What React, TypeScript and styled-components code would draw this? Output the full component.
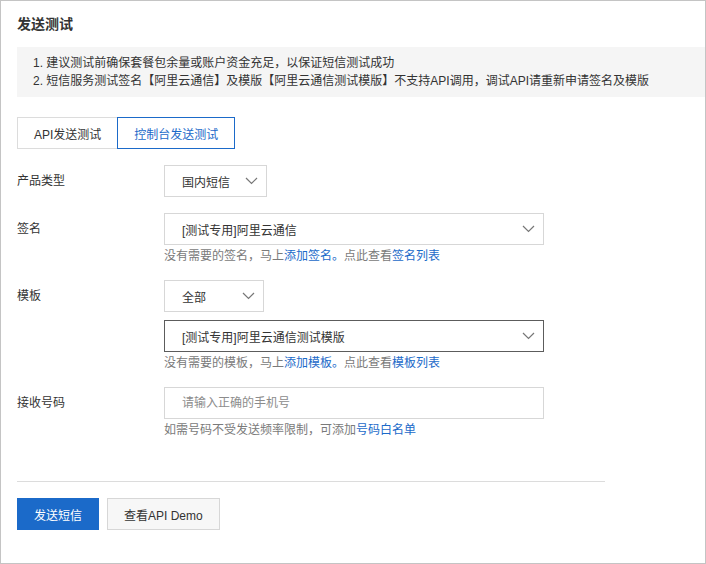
import React from "react";
import styled, { createGlobalStyle } from "styled-components";

const GlobalStyle = createGlobalStyle`
    html, body {
        margin: 0;
        padding: 0;
        background: #fff;
    }
    body {
        font-family: "Liberation Sans", "Noto Sans CJK SC", sans-serif;
        font-size: 12px;
        color: #333;
    }
    * {
        box-sizing: border-box;
    }
`;

const Page = styled.div`
    width: 706px;
    height: 564px;
    border: 1px solid #c4c4c4;
    padding: 0 0 0 16px;
    display: flex;
    flex-direction: column;
`;

const Title = styled.h2`
    margin: 0;
    padding-top: 12px;
    height: 46px;
    line-height: 22px;
    font-size: 14px;
    font-weight: 700;
    color: #333;
`;

const Notice = styled.div`
    background: #f5f5f5;
    padding: 7px 16px;
    line-height: 18px;
    font-size: 12px;
    color: #333;
`;

const Tabs = styled.div`
    display: flex;
    margin-top: 20px;
`;

const Tab = styled.button<{ $active?: boolean }>`
    height: 32px;
    padding: 0 16px;
    font-family: inherit;
    font-size: 12px;
    background: #fff;
    cursor: pointer;
    color: ${({ $active }) => ($active ? "#1b6ac9" : "#333")};
    border: 1px solid ${({ $active }) => ($active ? "#1b6ac9" : "#dcdcdc")};
    margin-left: ${({ $active }) => ($active ? "-1px" : "0")};
`;

const Form = styled.div`
    display: flex;
    flex-direction: column;
    gap: 16px;
    margin-top: 16px;
`;

const Row = styled.div`
    display: flex;
    align-items: flex-start;
`;

const Label = styled.div`
    width: 147px;
    flex: 0 0 auto;
    line-height: 32px;
    color: #333;
`;

const Control = styled.div`
    display: flex;
    flex-direction: column;
    gap: 8px;
`;

const Field = styled.div`
    display: flex;
    flex-direction: column;
`;

const SelectBox = styled.div<{ $width: number; $focus?: boolean }>`
    width: ${({ $width }) => $width}px;
    height: 32px;
    border: 1px solid ${({ $focus }) => ($focus ? "#5c5c5c" : "#d7d7d7")};
    background: #fff;
    display: flex;
    align-items: center;
    justify-content: space-between;
    padding: 0 8px 0 17px;
    color: #333;
    cursor: pointer;
`;

const InputBox = styled.input`
    width: 380px;
    height: 32px;
    border: 1px solid #d7d7d7;
    padding: 0 17px;
    font-family: inherit;
    font-size: 12px;
    color: #333;
    outline: none;

    &::placeholder {
        color: #8c8c8c;
    }
`;

const Help = styled.div`
    margin-top: 3px;
    line-height: 16px;
    color: #7a7a7a;
`;

const Link = styled.a`
    color: #1b6ac9;
    text-decoration: none;
    cursor: pointer;
`;

const Divider = styled.div`
    width: 588px;
    height: 1px;
    background: #dcdcdc;
    margin-top: 43px;
`;

const Actions = styled.div`
    display: flex;
    gap: 8px;
    margin-top: 16px;
`;

const Button = styled.button<{ $primary?: boolean }>`
    height: 32px;
    padding: 0 16px;
    font-family: inherit;
    font-size: 12px;
    cursor: pointer;
    background: ${({ $primary }) => ($primary ? "#1b6ac9" : "#f7f7f7")};
    color: ${({ $primary }) => ($primary ? "#fff" : "#333")};
    border: 1px solid ${({ $primary }) => ($primary ? "#1b6ac9" : "#d7d7d7")};
`;

const Chevron = () => (
    <svg width="13" height="8" viewBox="0 0 13 8" fill="none">
        <path d="M1 1 L6.5 6.5 L12 1" stroke="#777" strokeWidth="1.2" />
    </svg>
);

const Select: React.FC<{ value: string; width: number; focus?: boolean }> = ({ value, width, focus }) => (
    <SelectBox $width={width} $focus={focus}>
        <span>{value}</span>
        <Chevron />
    </SelectBox>
);

export default function App() {
    return (
        <>
            <GlobalStyle />
            <Page>
                <Title>发送测试</Title>
                <Notice>
                    <div>1. 建议测试前确保套餐包余量或账户资金充足，以保证短信测试成功</div>
                    <div>2. 短信服务测试签名【阿里云通信】及模版【阿里云通信测试模版】不支持API调用，调试API请重新申请签名及模版</div>
                </Notice>
                <Tabs>
                    <Tab>API发送测试</Tab>
                    <Tab $active>控制台发送测试</Tab>
                </Tabs>
                <Form>
                    <Row>
                        <Label>产品类型</Label>
                        <Select value="国内短信" width={103} />
                    </Row>
                    <Row>
                        <Label>签名</Label>
                        <Field>
                            <Select value="[测试专用]阿里云通信" width={380} />
                            <Help>
                                没有需要的签名，马上<Link>添加签名。</Link>点此查看<Link>签名列表</Link>
                            </Help>
                        </Field>
                    </Row>
                    <Row>
                        <Label>模板</Label>
                        <Field>
                            <Control>
                                <Select value="全部" width={100} />
                                <Select value="[测试专用]阿里云通信测试模版" width={380} focus />
                            </Control>
                            <Help>
                                没有需要的模板，马上<Link>添加模板。</Link>点此查看<Link>模板列表</Link>
                            </Help>
                        </Field>
                    </Row>
                    <Row>
                        <Label>接收号码</Label>
                        <Field>
                            <InputBox placeholder="请输入正确的手机号" />
                            <Help>
                                如需号码不受发送频率限制，可添加<Link>号码白名单</Link>
                            </Help>
                        </Field>
                    </Row>
                </Form>
                <Divider />
                <Actions>
                    <Button $primary>发送短信</Button>
                    <Button>查看API Demo</Button>
                </Actions>
            </Page>
        </>
    );
}
